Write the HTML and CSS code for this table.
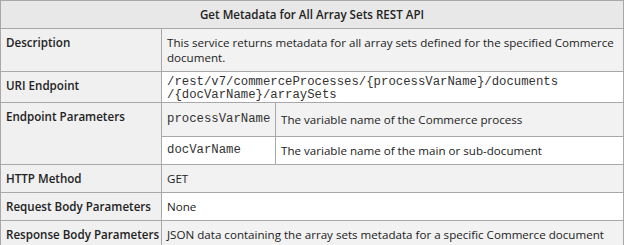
FILE: index.html
```html
<!DOCTYPE html>
<html lang="en">
<head>
  <meta charset="UTF-8">
  <title>Get Metadata for All Array Sets REST API</title>
  <link rel="stylesheet" href="styles.css">
</head>
<body>
  <table class="api-table">
    <colgroup>
      <col class="col-label">
      <col class="col-param">
      <col>
    </colgroup>
    <thead>
      <tr>
        <th colspan="3" class="title">Get Metadata for All Array Sets REST API</th>
      </tr>
    </thead>
    <tbody>
      <tr class="shade">
        <th>Description</th>
        <td colspan="2">This service returns metadata for all array sets defined for the specified Commerce document.</td>
      </tr>
      <tr>
        <th>URI Endpoint</th>
        <td colspan="2" class="mono uri"><code>/rest/v7/commerceProcesses/{processVarName}/documents<br>/{docVarName}/arraySets</code></td>
      </tr>
      <tr class="shade param-first">
        <th rowspan="2">Endpoint Parameters</th>
        <td class="mono"><code>processVarName</code></td>
        <td>The variable name of the Commerce process</td>
      </tr>
      <tr>
        <td class="mono"><code>docVarName</code></td>
        <td>The variable name of the main or sub-document</td>
      </tr>
      <tr class="shade">
        <th>HTTP Method</th>
        <td colspan="2">GET</td>
      </tr>
      <tr>
        <th>Request Body Parameters</th>
        <td colspan="2">None</td>
      </tr>
      <tr class="shade">
        <th>Response Body Parameters</th>
        <td colspan="2">JSON data containing the array sets metadata for a specific Commerce document</td>
      </tr>
    </tbody>
  </table>
</body>
</html>
```

FILE: styles.css
```css
* {
  box-sizing: border-box;
}

body {
  margin: 0;
  font-family: 'Open Sans', 'Noto Sans', Arial, sans-serif;
  font-size: 11.6px;
  color: #222;
  background-color: #fff;
}

.api-table {
  width: 624px;
  border-collapse: collapse;
  table-layout: fixed;
}

.api-table th,
.api-table td {
  border: 1px solid #a8a8a8;
  padding: 6px 5px;
  height: 28px;
  line-height: 15px;
  text-align: left;
  vertical-align: top;
}

.api-table th {
  background-color: #f0f0f0;
  font-weight: 600;
  white-space: nowrap;
}

.api-table th.title {
  background-color: #e8e8e8;
  text-align: center;
}

.api-table td {
  background-color: #fff;
}

.api-table tr.shade td {
  background-color: #f2f2f2;
}

.api-table td.mono {
  font-family: 'Liberation Mono', 'Courier New', monospace;
  font-size: 12.3px;
  color: #333;
}

code {
  font: inherit;
}

.api-table td.uri {
  padding-top: 4px;
  padding-bottom: 0;
  line-height: 13px;
}

.api-table tr.param-first td {
  padding-top: 9px;
  padding-bottom: 9px;
}

.col-label {
  width: 161px;
}

.col-param {
  width: 114px;
}
```
